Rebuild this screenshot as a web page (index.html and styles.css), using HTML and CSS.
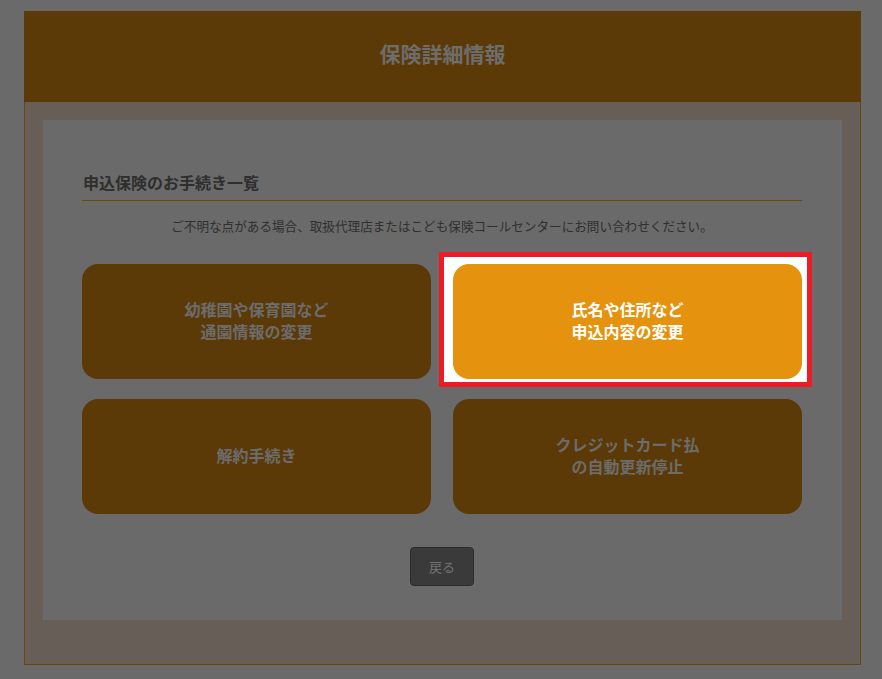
FILE: index.html
```html
<!DOCTYPE html>
<html lang="ja">
<head>
<meta charset="utf-8">
<title>保険詳細情報</title>
<link rel="stylesheet" href="styles.css">
</head>
<body>
<div class="container">
  <header class="header"><h1 class="title">保険詳細情報</h1></header>
  <div class="frame">
    <div class="panel">
      <h2 class="heading">申込保険のお手続き一覧</h2>
      <p class="notice">ご不明な点がある場合、取扱代理店またはこども保険コールセンターにお問い合わせください。</p>
      <div class="grid">
        <div class="cell"><button class="tile">幼稚園や保育園など<br>通園情報の変更</button></div>
        <div class="cell spot"><button class="tile tile-active">氏名や住所など<br>申込内容の変更</button></div>
        <div class="cell"><button class="tile">解約手続き</button></div>
        <div class="cell"><button class="tile">クレジットカード払<br>の自動更新停止</button></div>
      </div>
      <div class="back-row"><button class="back">戻る</button></div>
    </div>
  </div>
</div>
</body>
</html>
```
FILE: styles.css
```css
* { box-sizing: border-box; }
html, body { margin: 0; padding: 0; }
body {
  background: #6a6a6a;
  font-family: "Noto Sans CJK JP", "Noto Sans", sans-serif;
  width: 882px;
  height: 679px;
  overflow: hidden;
}
.container {
  margin: 11px 0 0 24px;
  width: 837px;
}
.header {
  background: #5b3a07;
  height: 91px;
  display: flex;
  align-items: center;
  justify-content: center;
}
.title {
  margin: 0;
  font-size: 21px;
  font-weight: 700;
  color: #6d6d6d;
  line-height: 1;
  padding-bottom: 6px;
}
.frame {
  background: #665e57;
  border: 1px solid #6b4509;
  border-top: none;
  padding: 18px 18px 44px;
}
.panel {
  background: #6a6a6a;
  height: 500px;
  padding: 51px 40px 0 39px;
}
.heading {
  margin: 0;
  font-size: 16px;
  font-weight: 700;
  line-height: 23px;
  color: #2e2e2e;
  padding: 0 0 6px 1px;
  border-bottom: 1px solid #6b4a10;
}
.notice {
  margin: 16px 0 0;
  font-size: 12.6px;
  line-height: 18px;
  color: #2f2f2f;
  text-align: center;
}
.grid {
  margin-top: 29px;
  display: grid;
  grid-template-columns: 349px 349px;
  grid-auto-rows: 115px;
  column-gap: 22px;
  row-gap: 20px;
}
.cell { display: flex; }
.tile {
  flex: 1;
  border: none;
  border-radius: 16px;
  background: #5b3a07;
  color: #6c6c6c;
  font-family: inherit;
  font-size: 16px;
  font-weight: 700;
  line-height: 22px;
  padding: 0 0 4px;
}
.spot { position: relative; }
.spot::before {
  content: "";
  position: absolute;
  top: -12px;
  left: -14px;
  right: -10px;
  bottom: -8px;
  border: 5px solid #ed1c24;
  background: #ffffff;
}
.tile-active {
  position: relative;
  background: #e5930f;
  color: #ffffff;
}
.back-row {
  margin-top: 33px;
  display: flex;
  justify-content: center;
}
.back {
  width: 64px;
  height: 39px;
  background: #3a3a3a;
  border: 1px solid #2c2c2c;
  border-radius: 4px;
  color: #727272;
  font-family: inherit;
  font-size: 13px;
  padding: 0;
}
```
